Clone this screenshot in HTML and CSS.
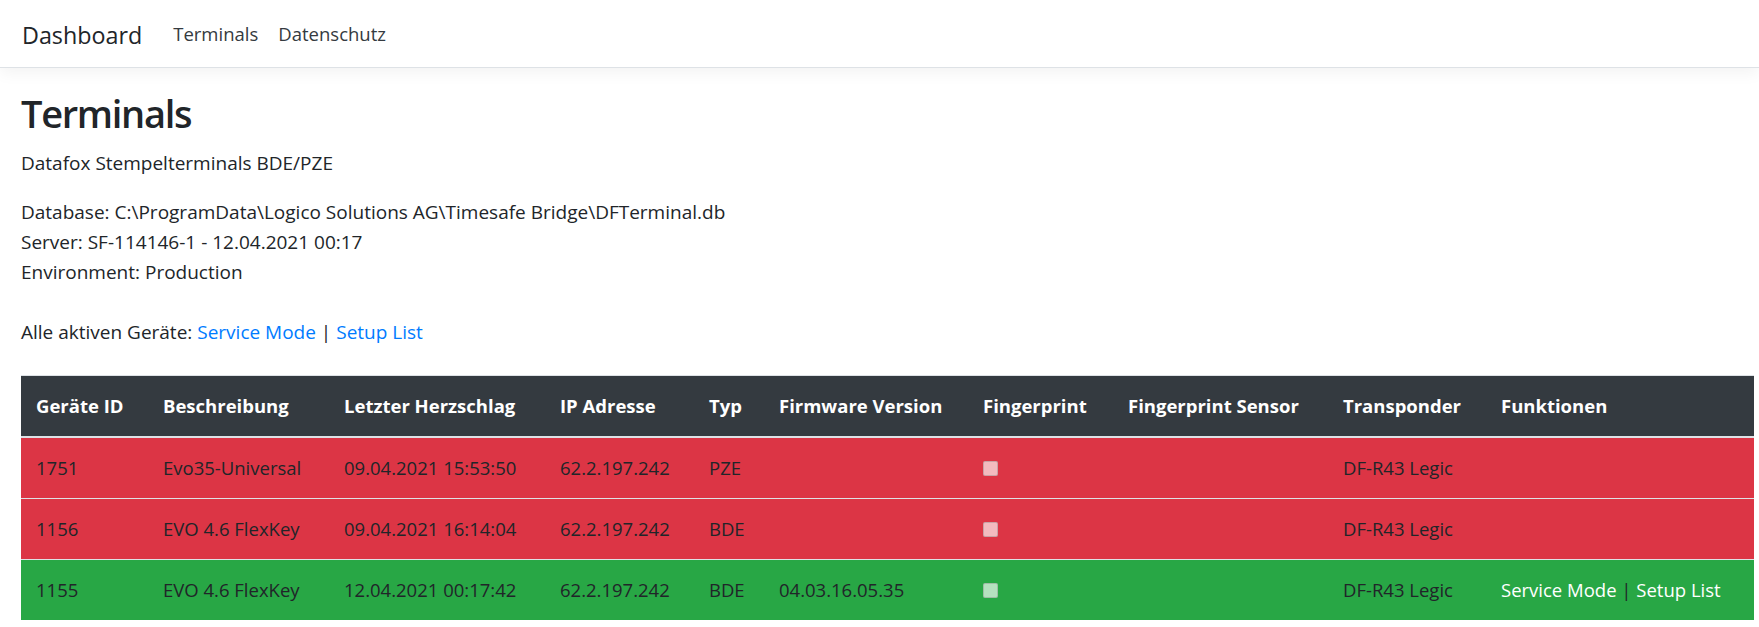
FILE: index.html
```html
<!DOCTYPE html>
<html lang="de">
<head>
    <meta charset="UTF-8">
    <meta name="viewport" content="width=device-width, initial-scale=1.0">
    <title>Terminals - Dashboard</title>
    <link rel="stylesheet" href="styles.css">
</head>
<body>
    <header class="navbar">
        <a class="navbar-brand" href="#">Dashboard</a>
        <nav class="navbar-nav">
            <a class="nav-link" href="#">Terminals</a>
            <a class="nav-link" href="#">Datenschutz</a>
        </nav>
    </header>

    <main class="container">
        <h1>Terminals</h1>
        <p class="lead">Datafox Stempelterminals BDE/PZE</p>

        <p class="info">
            Database: C:\ProgramData\Logico Solutions AG\Timesafe Bridge\DFTerminal.db<br>
            Server: SF-114146-1 - 12.04.2021 00:17<br>
            Environment: Production
        </p>

        <p class="actions">
            Alle aktiven Geräte: <a href="#">Service Mode</a> | <a href="#">Setup List</a>
        </p>

        <table class="table">
            <colgroup>
                <col style="width: 127px">
                <col style="width: 181px">
                <col style="width: 216px">
                <col style="width: 149px">
                <col style="width: 70px">
                <col style="width: 204px">
                <col style="width: 145px">
                <col style="width: 215px">
                <col style="width: 158px">
                <col style="width: 268px">
            </colgroup>
            <thead>
                <tr>
                    <th>Geräte ID</th>
                    <th>Beschreibung</th>
                    <th>Letzter Herzschlag</th>
                    <th>IP Adresse</th>
                    <th>Typ</th>
                    <th>Firmware Version</th>
                    <th>Fingerprint</th>
                    <th>Fingerprint Sensor</th>
                    <th>Transponder</th>
                    <th>Funktionen</th>
                </tr>
            </thead>
            <tbody>
                <tr class="row-danger">
                    <td>1751</td>
                    <td>Evo35-Universal</td>
                    <td>09.04.2021 15:53:50</td>
                    <td>62.2.197.242</td>
                    <td>PZE</td>
                    <td></td>
                    <td><input type="checkbox" class="check" disabled></td>
                    <td></td>
                    <td>DF-R43 Legic</td>
                    <td></td>
                </tr>
                <tr class="row-danger">
                    <td>1156</td>
                    <td>EVO 4.6 FlexKey</td>
                    <td>09.04.2021 16:14:04</td>
                    <td>62.2.197.242</td>
                    <td>BDE</td>
                    <td></td>
                    <td><input type="checkbox" class="check" disabled></td>
                    <td></td>
                    <td>DF-R43 Legic</td>
                    <td></td>
                </tr>
                <tr class="row-success">
                    <td>1155</td>
                    <td>EVO 4.6 FlexKey</td>
                    <td>12.04.2021 00:17:42</td>
                    <td>62.2.197.242</td>
                    <td>BDE</td>
                    <td>04.03.16.05.35</td>
                    <td><input type="checkbox" class="check" disabled></td>
                    <td></td>
                    <td>DF-R43 Legic</td>
                    <td class="functions"><a href="#">Service Mode</a> | <a href="#">Setup List</a></td>
                </tr>
            </tbody>
        </table>
    </main>
</body>
</html>
```

FILE: styles.css
```css
body {
    margin: 0;
    font-family: "Open Sans", "Noto Sans", sans-serif;
    font-size: 19px;
    line-height: 30px;
    color: #212529;
    background: #fff;
}
a {
    color: #007bff;
    text-decoration: none;
}

/* top navigation */
.navbar {
    display: flex;
    align-items: center;
    height: 67px;
    padding: 0 22px;
    background: #fff;
    border-bottom: 1px solid #dee2e6;
    box-shadow: 0 5px 15px rgba(0, 0, 0, 0.05);
}
.navbar-brand {
    color: #212529;
    font-size: 23.3px;
    margin-right: 21px;
    padding-top: 2px;
}
.navbar-nav {
    display: flex;
}
.nav-link {
    color: #343a40;
    font-size: 18.5px;
    padding: 0 10px;
}

.container {
    padding: 20px 5px 0 21px;
}
h1 {
    margin: 0 0 10px;
    font-size: 38px;
    line-height: 50px;
    font-weight: 600;
    letter-spacing: -1.3px;
}
p {
    margin: 0 0 19px;
}
.info {
    margin-bottom: 30px;
}
.actions {
    margin-bottom: 28px;
}

/* terminal table */
.table {
    table-layout: fixed;
    width: 1733px;
    border-collapse: collapse;
    white-space: nowrap;
    font-size: 18.5px;
}
.table th,
.table td {
    padding: 15px;
    text-align: left;
    vertical-align: top;
    border-top: 1px solid #dee2e6;
}
.table thead th {
    background: #343a40;
    color: #fff;
    font-weight: 700;
    border-bottom: 2px solid #dee2e6;
}
.row-danger td {
    background: #dc3545;
}
.row-success td {
    background: #28a745;
}
.functions a {
    color: #fff;
}
.check {
    display: block;
    appearance: none;
    width: 15px;
    height: 15px;
    margin: 8px 0 0;
    border: 1px solid rgba(120, 120, 120, 0.35);
    border-radius: 2px;
    background: rgba(255, 255, 255, 0.66);
}
```
